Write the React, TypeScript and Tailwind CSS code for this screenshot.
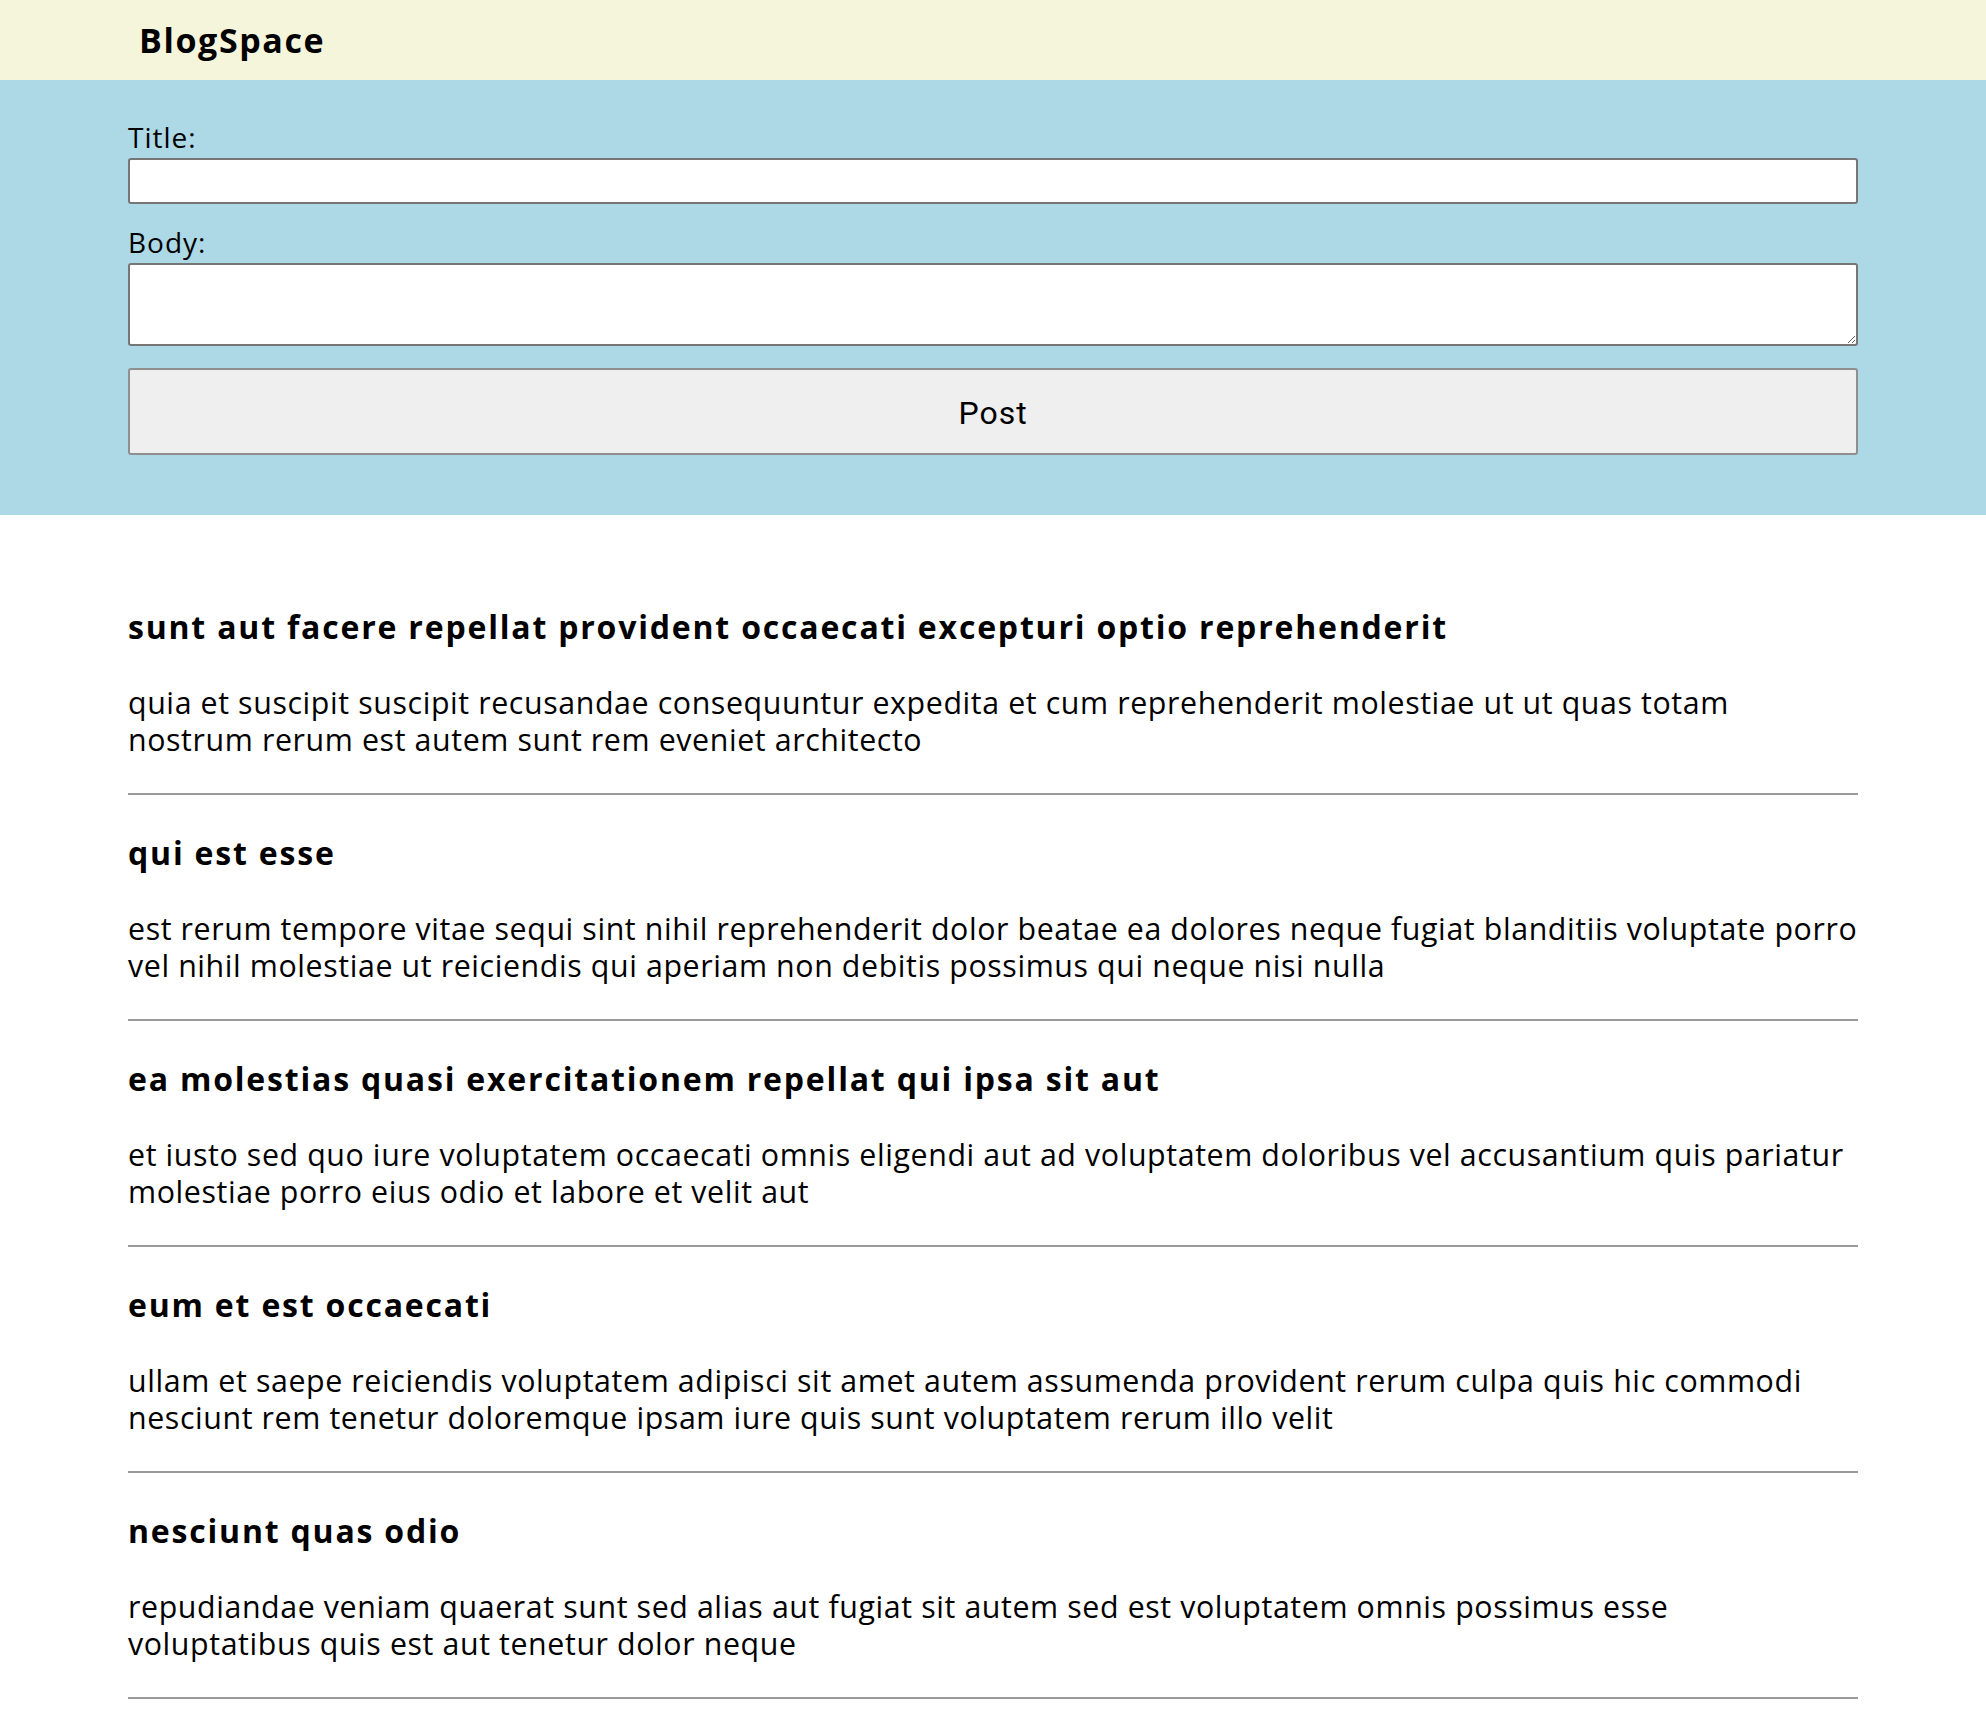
import React, { useState } from 'react';

interface Post {
  id: number;
  title: string;
  body: string;
}

const posts: Post[] = [
  {
    id: 1,
    title: 'sunt aut facere repellat provident occaecati excepturi optio reprehenderit',
    body: 'quia et suscipit suscipit recusandae consequuntur expedita et cum reprehenderit molestiae ut ut quas totam nostrum rerum est autem sunt rem eveniet architecto',
  },
  {
    id: 2,
    title: 'qui est esse',
    body: 'est rerum tempore vitae sequi sint nihil reprehenderit dolor beatae ea dolores neque fugiat blanditiis voluptate porro vel nihil molestiae ut reiciendis qui aperiam non debitis possimus qui neque nisi nulla',
  },
  {
    id: 3,
    title: 'ea molestias quasi exercitationem repellat qui ipsa sit aut',
    body: 'et iusto sed quo iure voluptatem occaecati omnis eligendi aut ad voluptatem doloribus vel accusantium quis pariatur molestiae porro eius odio et labore et velit aut',
  },
  {
    id: 4,
    title: 'eum et est occaecati',
    body: 'ullam et saepe reiciendis voluptatem adipisci sit amet autem assumenda provident rerum culpa quis hic commodi nesciunt rem tenetur doloremque ipsam iure quis sunt voluptatem rerum illo velit',
  },
  {
    id: 5,
    title: 'nesciunt quas odio',
    body: 'repudiandae veniam quaerat sunt sed alias aut fugiat sit autem sed est voluptatem omnis possimus esse voluptatibus quis est aut tenetur dolor neque',
  },
];

const App: React.FC = () => {
  const [title, setTitle] = useState('');
  const [body, setBody] = useState('');

  return (
    <div className="min-h-screen bg-white text-black font-['Open_Sans',sans-serif]">
      {/* Top bar */}
      <header className="h-[80px] bg-[#f5f5dc] flex items-center px-[139px]">
        <h1 className="text-[34px] font-bold tracking-[1.6px]">BlogSpace</h1>
      </header>

      {/* New post form */}
      <form
        className="bg-[#add8e6] px-[128px] pt-[38px] pb-[60px] flex flex-col"
        onSubmit={(e) => e.preventDefault()}
      >
        <label className="text-[28px] leading-[38px] tracking-[1px]">Title:</label>
        <input
          value={title}
          onChange={(e) => setTitle(e.target.value)}
          className="mt-[2px] h-[46px] bg-white border-2 border-[#767676] rounded-[3px]"
        />
        <label className="mt-[19px] text-[28px] leading-[38px] tracking-[1px]">Body:</label>
        <textarea
          value={body}
          onChange={(e) => setBody(e.target.value)}
          className="mt-[2px] h-[83px] bg-white border-2 border-[#767676] rounded-[3px]"
        />
        <button
          type="submit"
          className="mt-[22px] h-[87px] pt-[3px] bg-[#efefef] border-2 border-[#8f8f8f] rounded-[3px] text-[32px] tracking-[1px] font-['Roboto',sans-serif]"
        >
          Post
        </button>
      </form>

      {/* Posts */}
      <main className="px-[128px] pt-[54px]">
        {posts.map((post) => (
          <article key={post.id} className="pt-[38px] pb-[35px] border-b-2 border-[#9a9a9a]">
            <h2 className="text-[32px] leading-[40px] font-bold tracking-[1.8px]">{post.title}</h2>
            <p className="mt-[37px] text-[30.35px] leading-[37px] tracking-[0.6px]">{post.body}</p>
          </article>
        ))}
      </main>
    </div>
  );
};

export default App;
